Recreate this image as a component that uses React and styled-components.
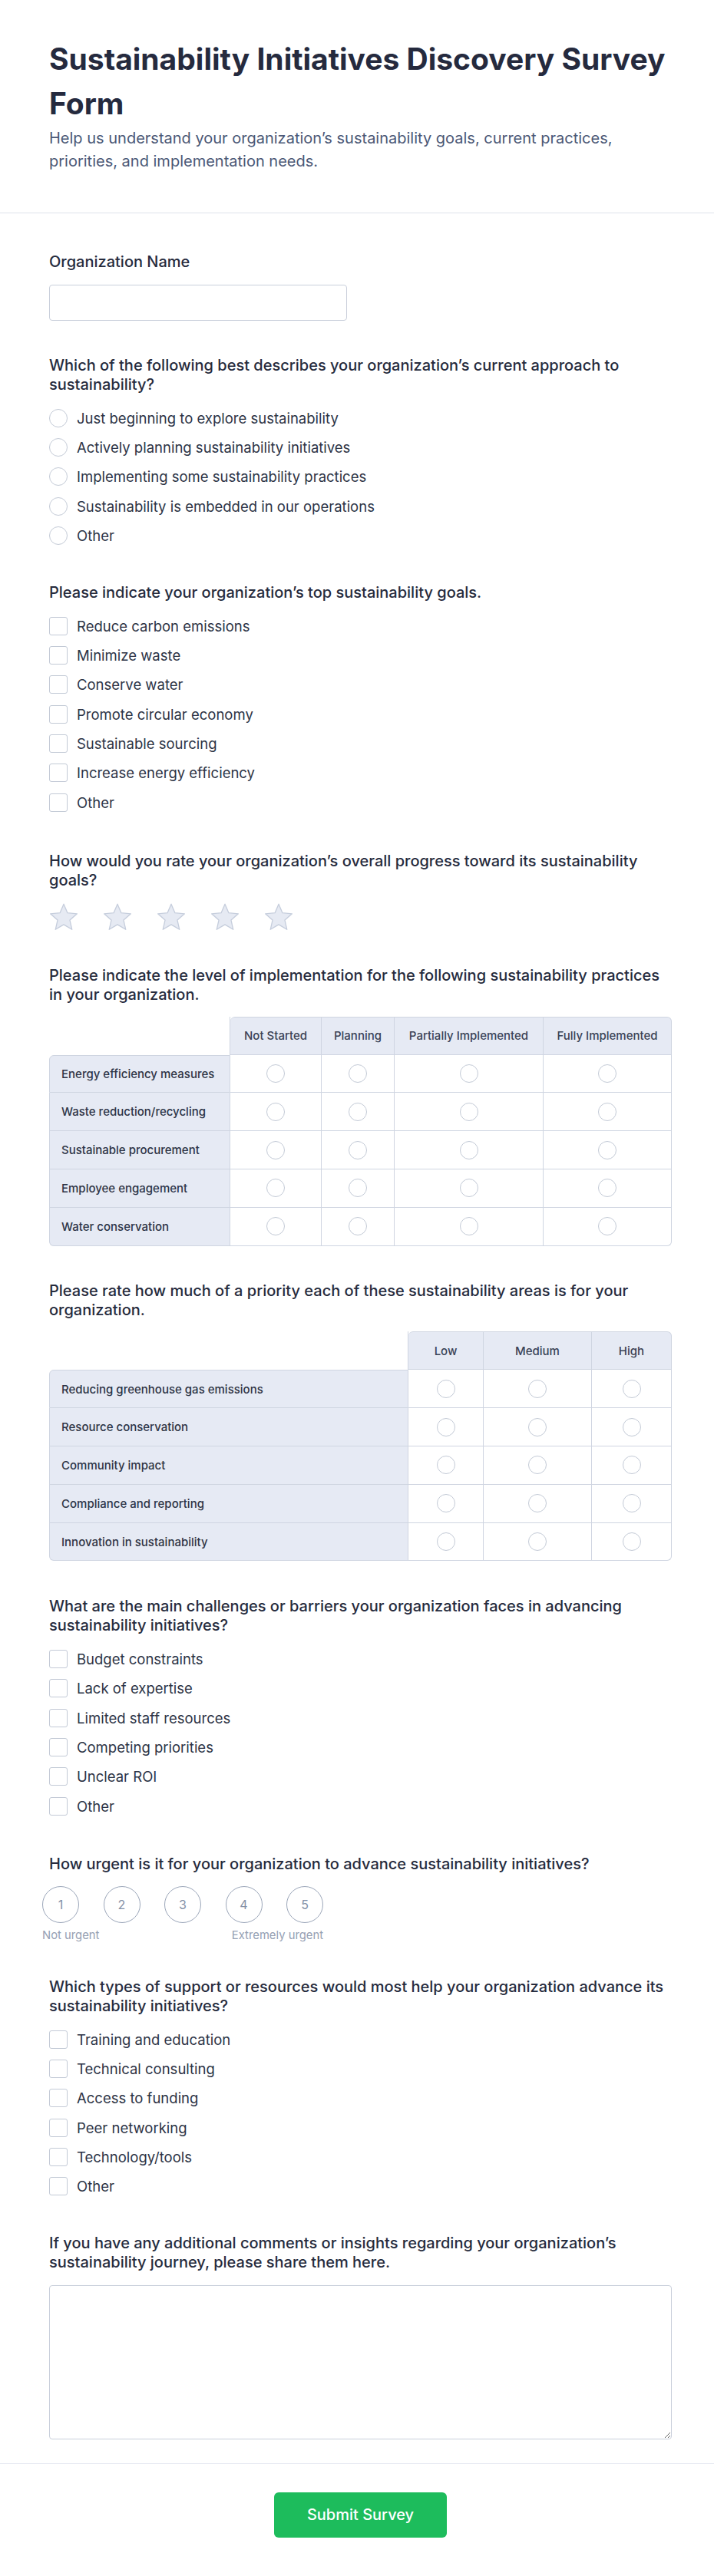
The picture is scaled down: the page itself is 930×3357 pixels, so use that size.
import React from "react";
import styled, { createGlobalStyle } from "styled-components";

const GlobalStyle = createGlobalStyle`
  * {
    box-sizing: border-box;
  }
  body {
    margin: 0;
    background: #ffffff;
    font-family: Inter, "Noto Sans", "Liberation Sans", sans-serif;
    color: #2d3446;
  }
`;

const Header = styled.header`
  padding: 48px 55px 52px 64px;
  border-bottom: 1px solid #dfe3eb;
`;

const Title = styled.h1`
  margin: 0 0 1px;
  font-size: 39px;
  line-height: 58px;
  font-weight: 700;
  color: #252a3e;
`;

const Subtitle = styled.p`
  margin: 0;
  font-size: 20px;
  line-height: 30px;
  color: #4b5876;
`;

const Form = styled.form`
  padding: 51px 55px 31px 64px;
`;

const Field = styled.div`
  margin-bottom: ${(p) => p.$mb ?? 48}px;

  &:last-child {
    margin-bottom: 0;
  }
`;

const Question = styled.div`
  font-size: 20px;
  line-height: 25px;
  font-weight: 500;
  color: #262b3d;
  margin-bottom: ${(p) => p.$mb ?? 16.5}px;
`;

const TextInput = styled.input`
  display: block;
  width: 388px;
  height: 47px;
  border: 1px solid #c9cfdb;
  border-radius: 4px;
  padding: 0 12px;
  font: inherit;
  font-size: 18px;
  background: #ffffff;
`;

const Options = styled.div`
  display: flex;
  flex-direction: column;
  gap: 9.9px;
`;

const Option = styled.label`
  display: flex;
  align-items: center;
  gap: 12px;
  height: 28.4px;
  font-size: 18.5px;
  color: #2d3446;
`;

const Mark = styled.span`
  flex: none;
  width: 24px;
  height: 24px;
  border: 1.5px solid #c3cad6;
  border-radius: ${(p) => (p.$square ? "3px" : "50%")};
  background: #ffffff;
`;

const Stars = styled.div`
  display: flex;
  gap: 32px;
  height: 37px;
`;

const Table = styled.table`
  width: 100%;
  table-layout: fixed;
  border-collapse: separate;
  border-spacing: 0;
  font-size: 15px;
`;

const Col = styled.col`
  width: ${(p) => p.$w}px;
`;

const line = "1px solid #cfd5e1";

const HeadCell = styled.th`
  height: 50px;
  padding: 0 6px;
  font-weight: 500;
  color: #3a4255;
  text-align: center;
  white-space: nowrap;
  background: #e6eaf4;
  border-top: ${line};
  border-right: ${line};
  border-bottom: ${line};

  &:nth-child(2) {
    border-top-left-radius: 6px;
  }
  &:last-child {
    border-top-right-radius: 6px;
  }
`;

const Corner = styled.th`
  border-right: ${line};
`;

const RowLabel = styled.td`
  height: 49.8px;
  padding: 0 15px;
  font-weight: 500;
  color: #2d3446;
  white-space: nowrap;
  background: #e6eaf4;
  border-left: ${line};
  border-right: ${line};
  border-bottom: ${line};

  tr:first-child > & {
    border-top: ${line};
    border-top-left-radius: 6px;
  }
  tr:last-child > & {
    border-bottom-left-radius: 6px;
  }
`;

const RadioCell = styled.td`
  height: 49.8px;
  text-align: center;
  vertical-align: middle;
  border-right: ${line};
  border-bottom: ${line};

  tr:last-child > &:last-child {
    border-bottom-right-radius: 6px;
  }

  ${Mark} {
    display: inline-block;
    vertical-align: middle;
  }
`;

const Scale = styled.div`
  margin-left: -9px;
  width: 366px;
`;

const ScaleRow = styled.div`
  display: flex;
  gap: 31.5px;
`;

const ScaleDot = styled.span`
  display: flex;
  align-items: center;
  justify-content: center;
  width: 48px;
  height: 48px;
  border: 1.5px solid #9ba6b9;
  border-radius: 50%;
  font-size: 16px;
  color: #8390a6;
`;

const ScaleEnds = styled.div`
  display: flex;
  justify-content: space-between;
  margin-top: 6px;
  font-size: 14.8px;
  line-height: 20px;
  color: #95a0b3;
`;

const TextArea = styled.textarea`
  display: block;
  width: 100%;
  height: 201px;
  border: 1px solid #c9cfdb;
  border-radius: 4px;
  padding: 10px 12px;
  font: inherit;
  font-size: 18px;
  resize: vertical;
`;

const Footer = styled.footer`
  display: flex;
  justify-content: center;
  padding: 37px 55px 50px 64px;
  border-top: 1px solid #e6eaf2;
`;

const Submit = styled.button`
  padding: 16px 43px;
  border: none;
  border-radius: 6px;
  background: #1dbc5c;
  color: #ffffff;
  font-family: inherit;
  font-size: 20px;
  line-height: 27px;
  font-weight: 500;
`;

const Star = () => (
  <svg width="38" height="37" viewBox="0 0 38 37">
    <polygon
      points="19,1.2 23.94,12.7 36.4,13.85 26.99,22.1 29.76,34.3 19,27.9 8.24,34.3 11.01,22.1 1.6,13.85 14.06,12.7"
      fill="#e6eaf3"
      stroke="#c5cddc"
      strokeWidth="1.3"
      strokeLinejoin="round"
    />
  </svg>
);

const ChoiceList = ({ items, square }) => (
  <Options>
    {items.map((t) => (
      <Option key={t}>
        <Mark $square={square} />
        {t}
      </Option>
    ))}
  </Options>
);

const Matrix = ({ widths, columns, rows }) => (
  <Table>
    <colgroup>
      {widths.map((w, i) => (
        <Col key={i} $w={w} />
      ))}
    </colgroup>
    <thead>
      <tr>
        <Corner />
        {columns.map((c) => (
          <HeadCell key={c}>{c}</HeadCell>
        ))}
      </tr>
    </thead>
    <tbody>
      {rows.map((r) => (
        <tr key={r}>
          <RowLabel>{r}</RowLabel>
          {columns.map((c) => (
            <RadioCell key={c}>
              <Mark />
            </RadioCell>
          ))}
        </tr>
      ))}
    </tbody>
  </Table>
);

const approach = [
  "Just beginning to explore sustainability",
  "Actively planning sustainability initiatives",
  "Implementing some sustainability practices",
  "Sustainability is embedded in our operations",
  "Other",
];

const goals = [
  "Reduce carbon emissions",
  "Minimize waste",
  "Conserve water",
  "Promote circular economy",
  "Sustainable sourcing",
  "Increase energy efficiency",
  "Other",
];

const challenges = [
  "Budget constraints",
  "Lack of expertise",
  "Limited staff resources",
  "Competing priorities",
  "Unclear ROI",
  "Other",
];

const support = [
  "Training and education",
  "Technical consulting",
  "Access to funding",
  "Peer networking",
  "Technology/tools",
  "Other",
];

const App = () => {
  return (
    <>
      <GlobalStyle />
      <Header>
        <Title>Sustainability Initiatives Discovery Survey Form</Title>
        <Subtitle>
          Help us understand your organization’s sustainability goals, current practices,
          priorities, and implementation needs.
        </Subtitle>
      </Header>

      <Form onSubmit={(e) => e.preventDefault()}>
        <Field $mb={46.4}>
          <Question $mb={16.8}>Organization Name</Question>
          <TextInput type="text" />
        </Field>

        <Field>
          <Question>
            Which of the following best describes your organization’s current approach to
            sustainability?
          </Question>
          <ChoiceList items={approach} />
        </Field>

        <Field $mb={50}>
          <Question>Please indicate your organization’s top sustainability goals.</Question>
          <ChoiceList items={goals} square />
        </Field>

        <Field $mb={45.5}>
          <Question $mb={16.8}>
            How would you rate your organization’s overall progress toward its sustainability
            goals?
          </Question>
          <Stars>
            {[1, 2, 3, 4, 5].map((n) => (
              <Star key={n} />
            ))}
          </Stars>
        </Field>

        <Field $mb={46.4}>
          <Question $mb={15.5}>
            Please indicate the level of implementation for the following sustainability
            practices in your organization.
          </Question>
          <Matrix
            widths={[236, 119, 95, 194, 167]}
            columns={["Not Started", "Planning", "Partially Implemented", "Fully Implemented"]}
            rows={[
              "Energy efficiency measures",
              "Waste reduction/recycling",
              "Sustainable procurement",
              "Employee engagement",
              "Water conservation",
            ]}
          />
        </Field>

        <Field $mb={47}>
          <Question $mb={15.5}>
            Please rate how much of a priority each of these sustainability areas is for your
            organization.
          </Question>
          <Matrix
            widths={[468, 98, 141, 104]}
            columns={["Low", "Medium", "High"]}
            rows={[
              "Reducing greenhouse gas emissions",
              "Resource conservation",
              "Community impact",
              "Compliance and reporting",
              "Innovation in sustainability",
            ]}
          />
        </Field>

        <Field $mb={49.4}>
          <Question>
            What are the main challenges or barriers your organization faces in advancing
            sustainability initiatives?
          </Question>
          <ChoiceList items={challenges} square />
        </Field>

        <Field $mb={44.8}>
          <Question $mb={16.2}>
            How urgent is it for your organization to advance sustainability initiatives?
          </Question>
          <Scale>
            <ScaleRow>
              {[1, 2, 3, 4, 5].map((n) => (
                <ScaleDot key={n}>{n}</ScaleDot>
              ))}
            </ScaleRow>
            <ScaleEnds>
              <span>Not urgent</span>
              <span>Extremely urgent</span>
            </ScaleEnds>
          </Scale>
        </Field>

        <Field>
          <Question>
            Which types of support or resources would most help your organization advance its
            sustainability initiatives?
          </Question>
          <ChoiceList items={support} square />
        </Field>

        <Field>
          <Question $mb={16.8}>
            If you have any additional comments or insights regarding your organization’s
            sustainability journey, please share them here.
          </Question>
          <TextArea />
        </Field>
      </Form>

      <Footer>
        <Submit type="submit">Submit Survey</Submit>
      </Footer>
    </>
  );
};

export default App;
